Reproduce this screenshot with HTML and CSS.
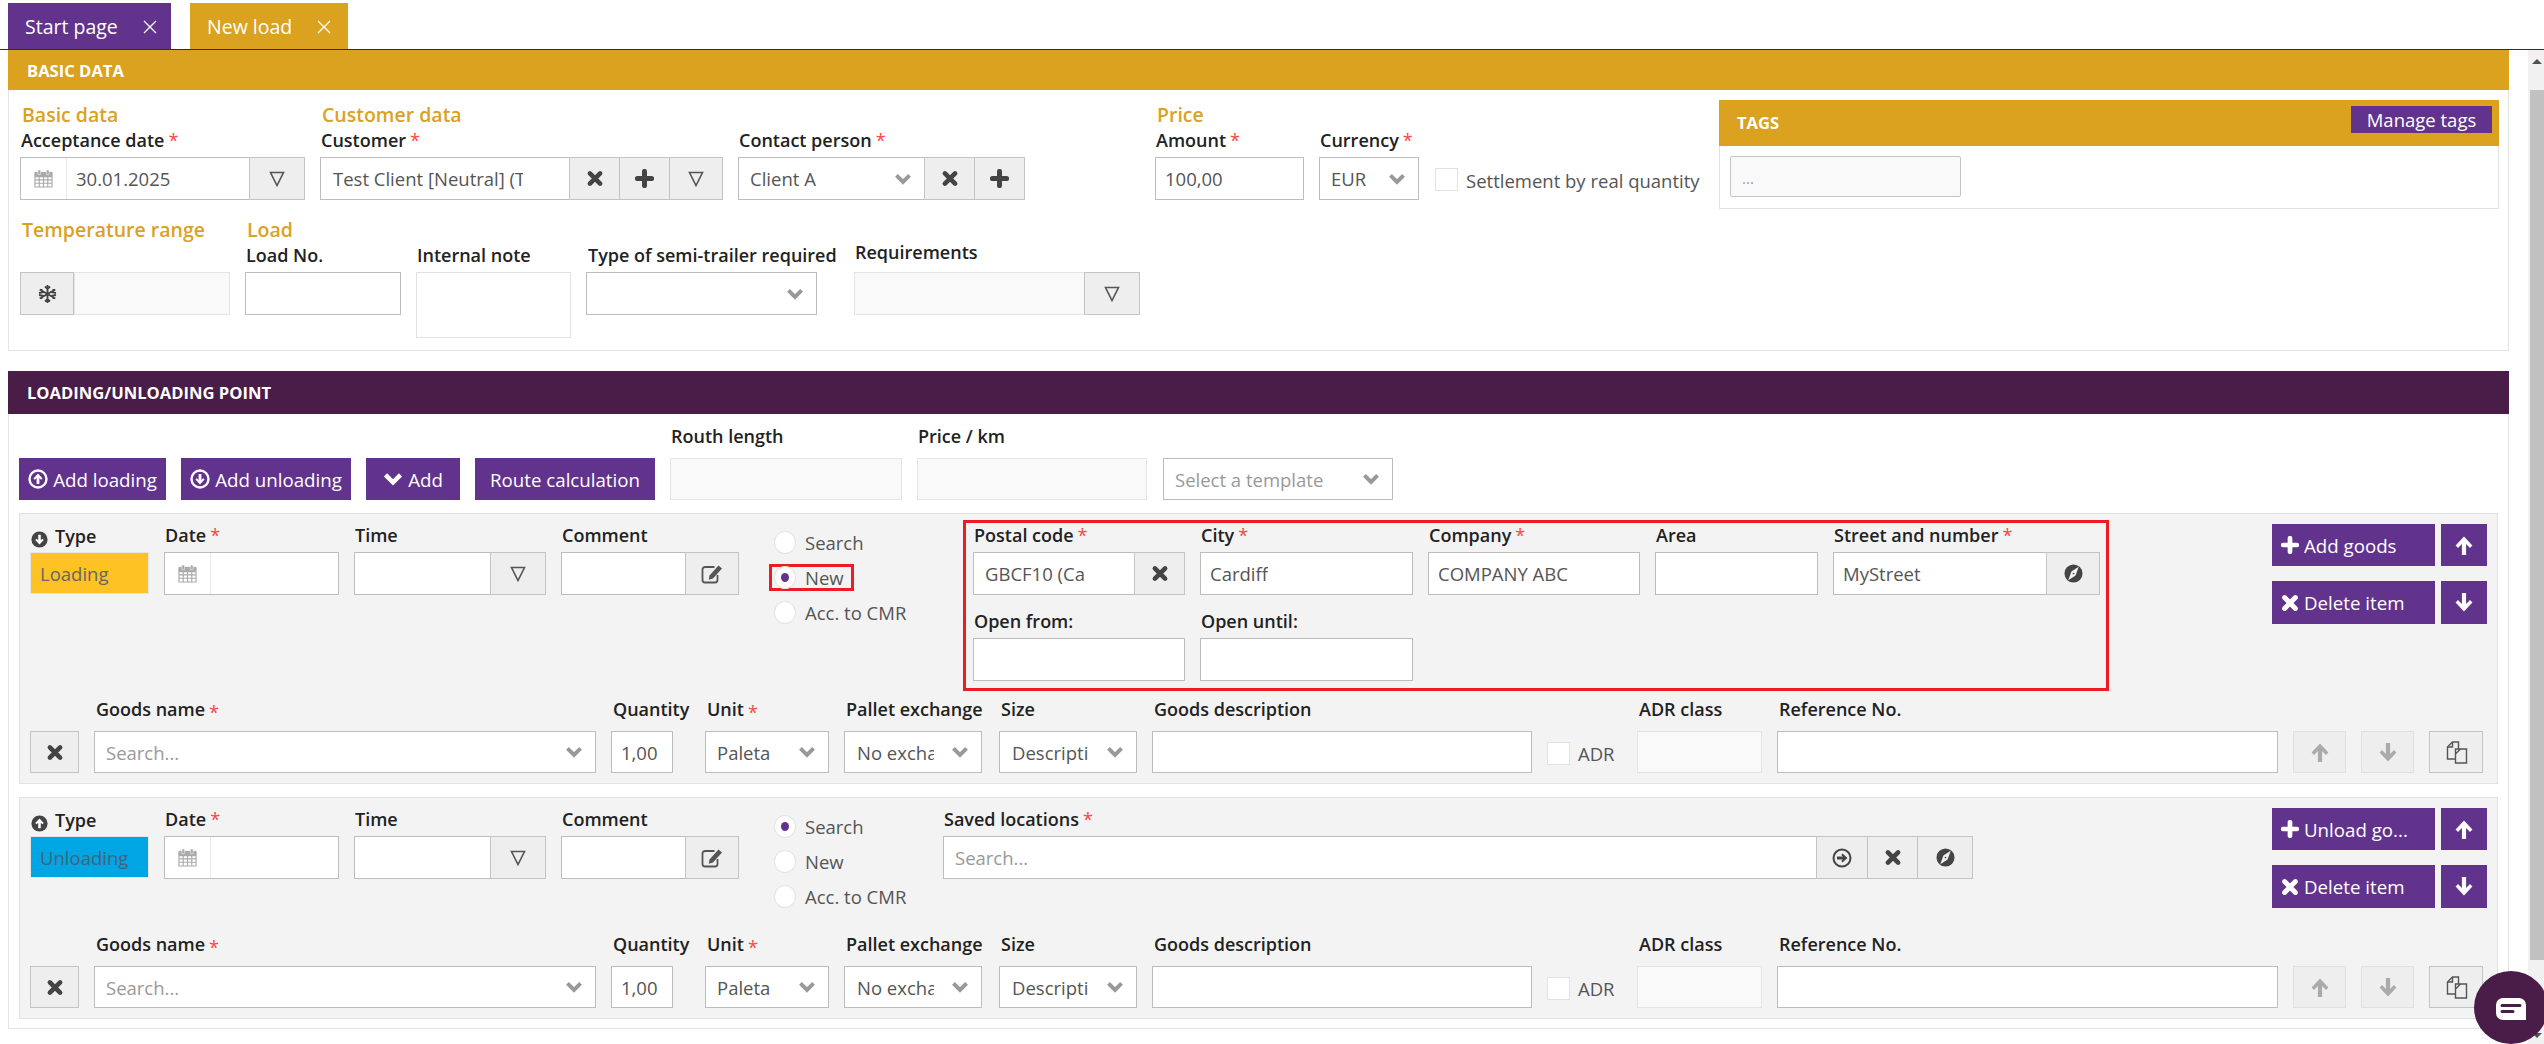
FILE: index.html
```html
<!DOCTYPE html>
<html lang="en">
<head>
<meta charset="utf-8">
<title>New load</title>
<link rel="stylesheet" href="styles.css">
</head>
<body>
<svg class="defs" aria-hidden="true">
  <symbol id="cal" viewBox="0 0 20 20"><path d="M1 4h18v15H1zM1 8h18M1 11.5h18M1 15h18M5.5 8v11M10 8v11M14.500 8v11" fill="none" stroke="currentColor" stroke-width="1.200"/><path d="M1 3h18v5H1z" fill="currentColor"/><rect x="4" y="1" width="3" height="5" rx="1" fill="currentColor" stroke="#fff" stroke-width=".6"/><rect x="13" y="1" width="3" height="5" rx="1" fill="currentColor" stroke="#fff" stroke-width=".6"/></symbol>
  <symbol id="thinx" viewBox="0 0 14 14"><path d="M1 1l12 12M13 1L1 13" fill="none" stroke="currentColor" stroke-width="1.300"/></symbol>
  <symbol id="filter" viewBox="0 0 16 16"><path d="M1.500 1.500h13L8 14.500z" fill="none" stroke="currentColor" stroke-width="1.600"/></symbol>
  <symbol id="x" viewBox="0 0 16 16"><path d="M3.200 3.200l9.600 9.600M12.800 3.200l-9.600 9.600" stroke="currentColor" stroke-width="4.400" stroke-linecap="round"/></symbol>
  <symbol id="plus" viewBox="0 0 16 16"><path d="M8 2v12M2 8h12" stroke="currentColor" stroke-width="4.200" stroke-linecap="round"/></symbol>
  <symbol id="chev" viewBox="0 0 16 11"><path d="M2 2.200l6 6 6-6" fill="none" stroke="currentColor" stroke-width="3.600"/></symbol>
  <symbol id="snow" viewBox="0 0 20 20"><path d="M10 1v18M2.200 5.500l15.600 9M17.800 5.500l-15.600 9M7.500 2.500L10 5l2.500-2.500M7.500 17.500L10 15l2.500 2.500M1.500 9l3.500-.6-1.200-3.300M18.500 11l-3.500.6 1.200 3.300M1.500 11l3.500.6-1.200 3.300M18.500 9l-3.500-.6 1.200-3.300" fill="none" stroke="currentColor" stroke-width="1.800"/></symbol>
  <symbol id="edit" viewBox="0 0 24 20"><path d="M17 11v5a2.500 2.500 0 0 1-2.500 2.500h-10A2.500 2.500 0 0 1 2 16V5.500A2.500 2.500 0 0 1 4.500 3H14" fill="none" stroke="currentColor" stroke-width="1.800"/><path d="M9 11.500L18 1.500l3.500 3-9 10-4.200 1.200z" fill="currentColor"/></symbol>
  <symbol id="compass" viewBox="0 0 20 20"><circle cx="10" cy="10" r="9.500" fill="currentColor"/><path d="M15.500 3L12.200 12.200 4.500 17 7.800 7.800z" fill="#f2f2f2"/><circle cx="10" cy="10" r=".9" fill="currentColor"/></symbol>
  <symbol id="up" viewBox="0 0 20 20"><path d="M10 1.500L18 10l-2.300 2.300-3.700-3.800V19H8V8.500l-3.700 3.800L2 10z" fill="currentColor"/></symbol>
  <symbol id="down" viewBox="0 0 20 20"><path d="M10 18.500L18 10l-2.300-2.300-3.700 3.800V1H8v10.500L4.300 7.700 2 10z" fill="currentColor"/></symbol>
  <symbol id="cup" viewBox="0 0 20 20"><circle cx="10" cy="10" r="9.500" fill="currentColor"/><path d="M10 4l5 5.500-1.700 1.500-1.800-2v6.500h-3V9l-1.800 2L5 9.500z" fill="#fff"/></symbol>
  <symbol id="cdown" viewBox="0 0 20 20"><circle cx="10" cy="10" r="9.500" fill="currentColor"/><path d="M10 16l5-5.500L13.300 9l-1.800 2V4.500h-3V11L6.700 9 5 10.500z" fill="#fff"/></symbol>
  <symbol id="ringup" viewBox="0 0 20 20"><circle cx="10" cy="10" r="8.500" fill="none" stroke="currentColor" stroke-width="2.400"/><path d="M10 4.500l4.600 5-1.500 1.300-1.700-1.800v6h-2.800V9l-1.700 1.800-1.500-1.300z" fill="currentColor"/></symbol>
  <symbol id="ringdown" viewBox="0 0 20 20"><circle cx="10" cy="10" r="8.500" fill="none" stroke="currentColor" stroke-width="2.400"/><path d="M10 15.500l4.600-5-1.500-1.300-1.700 1.800V5H8.600v6l-1.700-1.800-1.500 1.300z" fill="currentColor"/></symbol>
  <symbol id="ringright" viewBox="0 0 20 20"><circle cx="10" cy="10" r="8.500" fill="none" stroke="currentColor" stroke-width="2"/><path d="M15.500 10l-5-4.600-1.300 1.500 1.800 1.700H5v2.800h6l-1.800 1.700 1.300 1.500z" fill="currentColor"/></symbol>
  <symbol id="copy" viewBox="0 0 24 24"><path d="M11 19H3V7l5-5h6v7" fill="none" stroke="currentColor" stroke-width="1.400"/><path d="M3 7h5V2M11 9h11v14H11zM11 14l5-5" fill="none" stroke="currentColor" stroke-width="1.400"/></symbol>
  <symbol id="chat" viewBox="0 0 30 22"><path d="M7 0h16a7 7 0 0 1 7 7v15h-23a7 7 0 0 1-7-7V7a7 7 0 0 1 7-7z" fill="#fff"/><path d="M6 7.500h18M6 13.500h11" stroke="#4a1c48" stroke-width="3" stroke-linecap="round"/></symbol>
</svg>

<div class="app">
  <main class="main">
    <nav class="tabs">
      <div class="tab tab-start">Start page<svg class="i tab-x"><use href="#thinx"/></svg></div>
      <div class="tab tab-new">New load<svg class="i tab-x"><use href="#thinx"/></svg></div>
    </nav>

    <section class="panel panel-basic">
      <h2 class="band band-gold">BASIC DATA</h2>
      <div class="basic-body">
        <div class="basic-left">
          <div class="row-a">
            <div class="field">
              <div class="head">Basic data</div>
              <label class="lbl">Acceptance date<em>*</em></label>
              <div class="group">
                <div class="ctl ctl-grow has-cal"><span class="cal-box"><svg class="i i-cal"><use href="#cal"/></svg></span><span class="val">30.01.2025</span></div>
                <div class="addon addon-56"><svg class="i i-filter"><use href="#filter"/></svg></div>
              </div>
            </div>
            <div class="field">
              <div class="head">Customer data</div>
              <label class="lbl">Customer<em>*</em></label>
              <div class="group">
                <div class="ctl ctl-grow"><span class="val val-cust">Test Client [Neutral] (Test</span></div>
                <div class="addon addon-50"><svg class="i i-x"><use href="#x"/></svg></div>
                <div class="addon addon-50"><svg class="i i-plus"><use href="#plus"/></svg></div>
                <div class="addon addon-54"><svg class="i i-filter"><use href="#filter"/></svg></div>
              </div>
            </div>
            <div class="field field-nohead">
              <label class="lbl">Contact person<em>*</em></label>
              <div class="group">
                <div class="ctl ctl-grow ctl-select"><span class="val">Client A</span><svg class="i i-chev"><use href="#chev"/></svg></div>
                <div class="addon addon-50"><svg class="i i-x"><use href="#x"/></svg></div>
                <div class="addon addon-50"><svg class="i i-plus"><use href="#plus"/></svg></div>
              </div>
            </div>
            <div class="spacer"></div>
            <div class="field">
              <div class="head">Price</div>
              <label class="lbl">Amount<em>*</em></label>
              <div class="ctl"><span class="val val-tight">100,00</span></div>
            </div>
            <div class="field field-nohead">
              <label class="lbl">Currency<em>*</em></label>
              <div class="ctl ctl-select"><span class="val">EUR</span><svg class="i i-chev"><use href="#chev"/></svg></div>
            </div>
            <div class="check-wrap check-settle"><span class="check"></span><span class="check-text">Settlement by real quantity</span></div>
          </div>

          <div class="row-b">
            <div class="field">
              <div class="head">Temperature range</div>
              <label class="lbl">&nbsp;</label>
              <div class="group">
                <div class="addon addon-first addon-54"><svg class="i i-snow"><use href="#snow"/></svg></div>
                <div class="ctl ctl-grow ctl-off"></div>
              </div>
            </div>
            <div class="field">
              <div class="head">Load</div>
              <label class="lbl">Load No.</label>
              <div class="ctl"></div>
            </div>
            <div class="field field-nohead">
              <label class="lbl">Internal note</label>
              <div class="ctl ctl-note"></div>
            </div>
            <div class="field field-nohead">
              <label class="lbl lbl-type-semi">Type of semi-trailer required</label>
              <div class="ctl ctl-select"><span class="val"></span><svg class="i i-chev"><use href="#chev"/></svg></div>
            </div>
            <div class="field field-nohead field-req">
              <label class="lbl lbl-high">Requirements</label>
              <div class="group">
                <div class="ctl ctl-grow ctl-off"></div>
                <div class="addon addon-56"><svg class="i i-filter"><use href="#filter"/></svg></div>
              </div>
            </div>
          </div>
        </div>

        <aside class="tags">
          <div class="tags-head"><span class="tags-title">TAGS</span><button class="btn-manage">Manage tags</button></div>
          <div class="tags-body"><div class="tags-input">...</div></div>
        </aside>
      </div>
    </section>

    <section class="panel panel-points">
      <h2 class="band band-plum">LOADING/UNLOADING POINT</h2>
      <div class="points-body">
        <div class="actions">
          <button class="btn b-147"><svg class="i i-btn"><use href="#ringup"/></svg>Add loading</button>
          <button class="btn b-170"><svg class="i i-btn"><use href="#ringdown"/></svg>Add unloading</button>
          <button class="btn b-94"><svg class="i i-chev-w"><use href="#chev"/></svg>Add</button>
          <button class="btn b-180">Route calculation</button>
          <div class="field f-232"><label class="lbl">Routh length</label><div class="ctl ctl-off"></div></div>
          <div class="field f-230"><label class="lbl">Price / km</label><div class="ctl ctl-off"></div></div>
          <div class="ctl ctl-select f-230b"><span class="val val-ph">Select a template</span><svg class="i i-chev"><use href="#chev"/></svg></div>
        </div>

        <article class="stop">
          <div class="stop-top">
            <div class="stop-fields">
              <div class="field f-type">
                <label class="lbl lbl-type"><svg class="i i-type"><use href="#cdown"/></svg>Type</label>
                <div class="type-box type-load">Loading</div>
              </div>
              <div class="field f-date">
                <label class="lbl">Date<em>*</em></label>
                <div class="ctl has-cal"><span class="cal-box"><svg class="i i-cal"><use href="#cal"/></svg></span></div>
              </div>
              <div class="field f-time">
                <label class="lbl">Time</label>
                <div class="group"><div class="ctl ctl-grow"></div><div class="addon addon-56"><svg class="i i-filter"><use href="#filter"/></svg></div></div>
              </div>
              <div class="field f-comment">
                <label class="lbl">Comment</label>
                <div class="group"><div class="ctl ctl-grow"></div><div class="addon addon-54"><svg class="i i-edit"><use href="#edit"/></svg></div></div>
              </div>
            </div>
            <div class="radios">
              <div class="radio-row"><span class="radio"></span>Search</div>
              <div class="radio-row radio-marked"><span class="radio radio-on"></span>New</div>
              <div class="radio-row"><span class="radio"></span>Acc. to CMR</div>
            </div>
            <div class="address">
              <div class="field"><label class="lbl">Postal code<em>*</em></label>
                <div class="group"><div class="ctl ctl-grow"><span class="val val-postal">GBCF10 (Cardiff)</span></div><div class="addon addon-50"><svg class="i i-x"><use href="#x"/></svg></div></div></div>
              <div class="field"><label class="lbl">City<em>*</em></label><div class="ctl"><span class="val val-tight">Cardiff</span></div></div>
              <div class="field"><label class="lbl">Company<em>*</em></label><div class="ctl"><span class="val val-tight">COMPANY ABC</span></div></div>
              <div class="field"><label class="lbl">Area</label><div class="ctl"></div></div>
              <div class="field"><label class="lbl">Street and number<em>*</em></label>
                <div class="group"><div class="ctl ctl-grow"><span class="val val-tight">MyStreet</span></div><div class="addon addon-54"><svg class="i i-compass"><use href="#compass"/></svg></div></div></div>
              <div class="field"><label class="lbl">Open from:</label><div class="ctl"></div></div>
              <div class="field"><label class="lbl">Open until:</label><div class="ctl"></div></div>
            </div>
            <div class="stop-side">
              <button class="btn side-btn"><svg class="i i-side"><use href="#plus"/></svg>Add goods</button>
              <button class="btn side-icon"><svg class="i i-arrow"><use href="#up"/></svg></button>
              <button class="btn side-btn"><svg class="i i-side"><use href="#x"/></svg>Delete item</button>
              <button class="btn side-icon"><svg class="i i-arrow"><use href="#down"/></svg></button>
            </div>
          </div>
          <div class="goods">
            <div class="field"><label class="lbl lbl-goods">&nbsp;</label><div class="addon addon-first addon-full"><svg class="i i-x"><use href="#x"/></svg></div></div>
            <div class="field"><label class="lbl lbl-goods">Goods name<em>*</em></label><div class="ctl ctl-select"><span class="val val-ph">Search...</span><svg class="i i-chev"><use href="#chev"/></svg></div></div>
            <div class="field"><label class="lbl lbl-goods">Quantity</label><div class="ctl"><span class="val val-qty">1,00</span></div></div>
            <div class="field f-unit"><label class="lbl lbl-goods">Unit<em>*</em></label><div class="ctl ctl-select"><span class="val">Paleta</span><svg class="i i-chev"><use href="#chev"/></svg></div></div>
            <div class="field"><label class="lbl lbl-goods">Pallet exchange</label><div class="ctl ctl-select"><span class="val val-clip">No exchange</span><svg class="i i-chev"><use href="#chev"/></svg></div></div>
            <div class="field f-size"><label class="lbl lbl-goods">Size</label><div class="ctl ctl-select"><span class="val val-clip">Description</span><svg class="i i-chev"><use href="#chev"/></svg></div></div>
            <div class="field"><label class="lbl lbl-goods">Goods description</label><div class="ctl"></div></div>
            <div class="check-wrap check-adr"><span class="check"></span><span class="check-text">ADR</span></div>
            <div class="field"><label class="lbl lbl-goods">ADR class</label><div class="ctl ctl-off"></div></div>
            <div class="field"><label class="lbl lbl-goods">Reference No.</label><div class="ctl"></div></div>
            <div class="field"><label class="lbl lbl-goods">&nbsp;</label><div class="addon addon-first addon-full addon-off"><svg class="i i-arrow"><use href="#up"/></svg></div></div>
            <div class="field"><label class="lbl lbl-goods">&nbsp;</label><div class="addon addon-first addon-full addon-off"><svg class="i i-arrow"><use href="#down"/></svg></div></div>
            <div class="field"><label class="lbl lbl-goods">&nbsp;</label><div class="addon addon-first addon-full"><svg class="i i-copy"><use href="#copy"/></svg></div></div>
          </div>
        </article>

        <article class="stop stop-second">
          <div class="stop-top stop-top-short">
            <div class="stop-fields">
              <div class="field f-type">
                <label class="lbl lbl-type"><svg class="i i-type"><use href="#cup"/></svg>Type</label>
                <div class="type-box type-unload">Unloading</div>
              </div>
              <div class="field f-date">
                <label class="lbl">Date<em>*</em></label>
                <div class="ctl has-cal"><span class="cal-box"><svg class="i i-cal"><use href="#cal"/></svg></span></div>
              </div>
              <div class="field f-time">
                <label class="lbl">Time</label>
                <div class="group"><div class="ctl ctl-grow"></div><div class="addon addon-56"><svg class="i i-filter"><use href="#filter"/></svg></div></div>
              </div>
              <div class="field f-comment">
                <label class="lbl">Comment</label>
                <div class="group"><div class="ctl ctl-grow"></div><div class="addon addon-54"><svg class="i i-edit"><use href="#edit"/></svg></div></div>
              </div>
            </div>
            <div class="radios">
              <div class="radio-row"><span class="radio radio-on"></span>Search</div>
              <div class="radio-row"><span class="radio"></span>New</div>
              <div class="radio-row"><span class="radio"></span>Acc. to CMR</div>
            </div>
            <div class="field f-saved">
              <label class="lbl">Saved locations<em>*</em></label>
              <div class="group">
                <div class="ctl ctl-grow"><span class="val val-ph">Search...</span></div>
                <div class="addon addon-52"><svg class="i i-ring"><use href="#ringright"/></svg></div>
                <div class="addon addon-50"><svg class="i i-x"><use href="#x"/></svg></div>
                <div class="addon addon-56"><svg class="i i-compass"><use href="#compass"/></svg></div>
              </div>
            </div>
            <div class="stop-side">
              <button class="btn side-btn"><svg class="i i-side"><use href="#plus"/></svg>Unload go...</button>
              <button class="btn side-icon"><svg class="i i-arrow"><use href="#up"/></svg></button>
              <button class="btn side-btn"><svg class="i i-side"><use href="#x"/></svg>Delete item</button>
              <button class="btn side-icon"><svg class="i i-arrow"><use href="#down"/></svg></button>
            </div>
          </div>
          <div class="goods">
            <div class="field"><label class="lbl lbl-goods">&nbsp;</label><div class="addon addon-first addon-full"><svg class="i i-x"><use href="#x"/></svg></div></div>
            <div class="field"><label class="lbl lbl-goods">Goods name<em>*</em></label><div class="ctl ctl-select"><span class="val val-ph">Search...</span><svg class="i i-chev"><use href="#chev"/></svg></div></div>
            <div class="field"><label class="lbl lbl-goods">Quantity</label><div class="ctl"><span class="val val-qty">1,00</span></div></div>
            <div class="field f-unit"><label class="lbl lbl-goods">Unit<em>*</em></label><div class="ctl ctl-select"><span class="val">Paleta</span><svg class="i i-chev"><use href="#chev"/></svg></div></div>
            <div class="field"><label class="lbl lbl-goods">Pallet exchange</label><div class="ctl ctl-select"><span class="val val-clip">No exchange</span><svg class="i i-chev"><use href="#chev"/></svg></div></div>
            <div class="field f-size"><label class="lbl lbl-goods">Size</label><div class="ctl ctl-select"><span class="val val-clip">Description</span><svg class="i i-chev"><use href="#chev"/></svg></div></div>
            <div class="field"><label class="lbl lbl-goods">Goods description</label><div class="ctl"></div></div>
            <div class="check-wrap check-adr"><span class="check"></span><span class="check-text">ADR</span></div>
            <div class="field"><label class="lbl lbl-goods">ADR class</label><div class="ctl ctl-off"></div></div>
            <div class="field"><label class="lbl lbl-goods">Reference No.</label><div class="ctl"></div></div>
            <div class="field"><label class="lbl lbl-goods">&nbsp;</label><div class="addon addon-first addon-full addon-off"><svg class="i i-arrow"><use href="#up"/></svg></div></div>
            <div class="field"><label class="lbl lbl-goods">&nbsp;</label><div class="addon addon-first addon-full addon-off"><svg class="i i-arrow"><use href="#down"/></svg></div></div>
            <div class="field"><label class="lbl lbl-goods">&nbsp;</label><div class="addon addon-first addon-full"><svg class="i i-copy"><use href="#copy"/></svg></div></div>
          </div>
        </article>
      </div>
    </section>
  </main>
  <div class="scrollbar"><div class="sb-top"></div><span class="sb-up"></span><div class="sb-thumb"></div><span class="sb-down"></span></div>
</div>
<div class="chat"><svg class="i-chat"><use href="#chat"/></svg></div>
</body>
</html>
```

FILE: styles.css
```css
* { box-sizing: border-box; }
html, body { margin: 0; height: 1044px; overflow: hidden; background: #fff; }
body { font-family: "Open Sans", sans-serif; font-size: 18.5px; color: #555; position: relative; }
.defs { display: none; }
.app { display: flex; height: 1044px; }
.main { flex: 1; min-width: 0; }
.i { display: block; flex: none; }

/* tabs */
.tabs { display: flex; gap: 19px; height: 50px; padding: 3px 0 0 8px; border-bottom: 1px solid #4a1c48; }
.tab { height: 46px; display: flex; align-items: center; color: #fff; font-size: 19.5px; padding-left: 17px; }
.tab-start { width: 163px; background: #62338c; }
.tab-new { width: 158px; background: #daa21f; }
.tab-x { margin-left: 25px; width: 14px; height: 14px; margin-top: 1px; }

/* panels */
.panel { margin: 0 19px 0 8px; border: 1px solid #e4e4e4; border-top: 0; }
.band { margin: 0 -1px; padding-left: 19px; font-size: 16.6px; font-weight: 700; color: #fff; display: flex; align-items: center; }
.band-gold { background: #daa21f; height: 40px; }
.band-plum { background: #4a1c48; height: 43px; }
.panel-basic { height: 301px; }
.panel-points { margin-top: 20px; height: 658px; }

/* basic */
.basic-body { display: flex; justify-content: space-between; }
.basic-left { padding: 13px 0 0 11px; }
.row-a { display: grid; grid-template-columns: 285px 403px 287px 100px 149px 100px auto; column-gap: 15px; align-items: end; }
.row-b { display: grid; grid-template-columns: 210px 156px 155px 231px 308px; column-gap: 15px; align-items: start; margin-top: 18px; }
.field-req { justify-self: end; width: 286px; }
.spacer { height: 1px; }

.head { height: 26px; line-height: 24px; color: #daa21f; font-weight: 600; font-size: 19.5px; padding-left: 2px; white-space: nowrap; }
.lbl { display: block; height: 24px; line-height: 23px; margin-bottom: 4px; color: #222; font-weight: 600; font-size: 18px; padding-left: 1px; white-space: nowrap; }
.lbl em { color: #f44; font-style: normal; font-weight: 400; margin-left: 4px; }
.lbl-high { margin-top: -3px; margin-bottom: 7px; }
.lbl-type-semi { padding-left: 2px; }
.field-nohead { padding-top: 26px; }
.row-a .field-nohead { padding-top: 0; }

.group { display: flex; }
.ctl { height: 43px; border: 1px solid #bdbdbd; background: #fff; display: flex; align-items: center; min-width: 0; }
.ctl-grow { flex: 1; }
.ctl-off { background: #f9f9f9; border-color: #e4e4e4; }
.ctl-note { height: 66px; border-color: #e2e2e2; }
.ctl-select { justify-content: space-between; padding-right: 12px; }
.val { padding-left: 11px; white-space: nowrap; overflow: hidden; color: #555; }
.val-tight { padding-left: 9px; }
.val-ph { color: #999; }
.val-cust { width: 202px; padding-left: 12px; }
.val-postal { width: 111px; }
.val-clip { width: 89px; padding-left: 12px; }
.val-qty { padding-left: 9px; }
.cal-box { width: 46px; height: 100%; display: flex; align-items: center; justify-content: center; border-right: 1px solid #e8e8e8; color: #aaa; flex: none; }
.cal-box + .val { padding-left: 9px; }
.i-cal { width: 19px; height: 19px; }
.i-filter { width: 16px; height: 16px; color: #555; }
.i-x { width: 18px; height: 17px; color: #444; }
.i-plus { width: 19px; height: 19px; color: #444; }
.i-chev { width: 18px; height: 12px; color: #999; }
.i-snow { width: 21px; height: 20px; color: #444; }
.i-edit { width: 25px; height: 20px; color: #555; }
.i-compass { width: 19px; height: 19px; color: #444; }
.i-ring { width: 20px; height: 20px; color: #444; }
.addon { height: 43px; margin-left: -1px; border: 1px solid #c4c4c4; background: #eee; display: flex; align-items: center; justify-content: center; flex: none; }
.addon-first { margin-left: 0; }
.addon-50 { width: 51px; }
.addon-52 { width: 52px; }
.addon-54 { width: 54px; }
.addon-56 { width: 56px; }
.addon-full { width: 100%; height: 42px; }
.addon-off { border-color: #e0e0e0; color: #aaa; }
.addon-off .i-arrow { color: #aaa; }

.check-wrap { display: flex; align-items: center; }
.check { width: 23px; height: 23px; background: #fff; border: 1px solid #e2e2e2; flex: none; }
.check-text { margin-left: 8px; padding-top: 3px; white-space: nowrap; color: #555; }
.check-settle { padding: 0 0 7px 1px; }
.check-adr { padding-top: 44px; height: 67px; }
.check-adr .check-text { padding-top: 0; }

/* tags */
.tags { width: 780px; height: 109px; margin: 10px 9px 0 0; border: 1px solid #e2e2e2; border-top: 0; }
.tags-head { margin: 0 -1px; height: 46px; background: #daa21f; display: flex; justify-content: space-between; padding: 6px 7px 0 18px; }
.tags-title { color: #fff; font-weight: 700; font-size: 16.6px; line-height: 33px; }
.btn-manage { height: 27px; width: 141px; border: 0; background: #62338c; color: #fff; font: 400 18.5px "Open Sans", sans-serif; padding: 0; }
.tags-body { padding: 10px 0 0 10px; }
.tags-input { width: 231px; height: 41px; background: #f9f9f9; border: 1px solid #c4c4c4; border-radius: 2px; padding: 11px 11px 0; color: #999; font-size: 15px; }

/* points */
.points-body { padding: 0 10px; }
.actions { display: flex; align-items: flex-end; gap: 15px; height: 86px; }
.btn { height: 42px; border: 0; background: #62338c; color: #fff; font: 400 18.7px "Open Sans", sans-serif; display: flex; align-items: center; justify-content: center; gap: 5px; padding: 0; white-space: nowrap; }
.b-147 { width: 147px; }
.b-170 { width: 170px; }
.b-94 { width: 94px; }
.b-180 { width: 180px; }
.f-232 { width: 232px; }
.f-230 { width: 230px; }
.f-230b { width: 230px; margin-left: 1px; }
.i-btn { width: 20px; height: 20px; }
.i-chev-w { width: 20px; height: 14px; color: #fff; }
.actions .lbl { margin-bottom: 9px; }
.actions .ctl { height: 42px; }

.stop { margin-top: 13px; background: #f3f3f3; border: 1px solid #e2e2e2; padding: 10px; }
.stop-top { display: flex; align-items: flex-start; }
.stop-top-short { height: 125px; }
.stop-fields { display: flex; gap: 15px; }
.f-type { width: 119px; }
.f-date { width: 175px; }
.f-time { width: 192px; }
.f-comment { width: 178px; }
.lbl-type { display: flex; align-items: flex-end; gap: 7px; }
.i-type { width: 17px; height: 17px; color: #444; }
.type-box { height: 42px; border: 1px solid #e4e4e4; display: flex; align-items: center; padding-left: 9px; color: #666; }
.type-load { background: #fec225; }
.type-unload { background: #00a5e4; color: #46627a; }
.has-cal { background: #fff; }

.radios { margin: 1px 0 0 30px; width: 159px; }
.radio-row { height: 35px; display: flex; align-items: center; padding-left: 5px; gap: 9px; color: #555; white-space: nowrap; }
.radio { width: 22px; height: 23px; border-radius: 50%; background: #fff; border: 1px solid #e4e4e4; display: flex; align-items: center; justify-content: center; flex: none; }
.radio-on::after { content: ""; width: 8px; height: 9px; border-radius: 50%; background: #62338c; }
.radio-marked { width: 85px; height: 27px; margin: 4px 0; border: 3px solid #ed1c24; padding-left: 2px; }

.address { margin: -4px 0 7px 35px; border: 3px solid #ed1c24; width: 1146px; padding: 1px 0 7px 7px; display: grid; grid-template-columns: 212px 213px 212px 163px 267px; gap: 15px; }
.f-saved { width: 1030px; margin-left: 15px; }
.stop-side { margin-left: auto; display: grid; grid-template-columns: 163px 46px; grid-template-rows: 42px 43px; gap: 15px 6px; }
.stop-side .btn { height: 100%; }
.side-btn { justify-content: flex-start; padding-left: 9px; }
.side-icon { width: 46px; }
.i-side { width: 18px; height: 18px; color: #fff; }
.i-arrow { width: 22px; height: 21px; color: #fff; }
.i-copy { width: 25px; height: 24px; color: #555; }

.goods { display: grid; grid-template-columns: 49px 502px 62px 141px 138px 140px 380px 75px 125px 501px 53px 53px 54px; column-gap: 15px; align-items: start; }
.lbl-goods { height: 33px; line-height: 23px; margin: 0; padding-left: 2px; }
.lbl-goods em { vertical-align: -3px; }
.goods .ctl { height: 42px; }
.f-unit { padding-left: 17px; }
.f-size { padding-left: 2px; }

/* scrollbar */
.scrollbar { width: 16px; height: 1044px; background: #f1f1f1; display: flex; flex-direction: column; align-items: flex-end; }
.sb-top { width: 100%; height: 50px; flex: none; background: #fff; border-bottom: 1px solid #4a1c48; }
.sb-up { width: 0; height: 0; border: 5px solid transparent; border-top: 0; border-bottom: 5px solid #505050; margin: 9px 2px 0 0; }
.sb-thumb { width: 14px; height: 870px; margin-top: 26px; background: #c1c1c1; }
.sb-down { width: 0; height: 0; border: 5px solid transparent; border-bottom: 0; border-top: 5px solid #505050; margin: 73px 2px 0 0; }

/* chat */
.chat { position: absolute; left: 2474px; top: 971px; width: 74px; height: 73px; border-radius: 50%; background: #4a1c48; display: flex; align-items: center; justify-content: center; }
.i-chat { width: 30px; height: 22px; margin-top: 2px; }
```
